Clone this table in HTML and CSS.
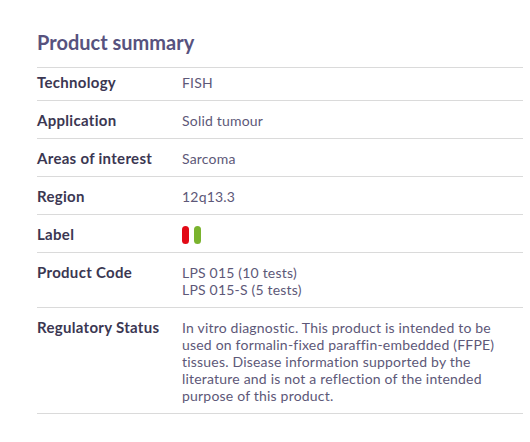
FILE: index.html
```html
<!DOCTYPE html>
<html>
<head>
<meta charset="utf-8">
<link rel="stylesheet" href="styles.css">
</head>
<body>
<section class="summary">
  <h2 class="title">Product summary</h2>
  <div class="table">
    <div class="row first"><div class="key">Technology</div><div class="val">FISH</div></div>
    <div class="row"><div class="key">Application</div><div class="val">Solid tumour</div></div>
    <div class="row"><div class="key">Areas of interest</div><div class="val">Sarcoma</div></div>
    <div class="row"><div class="key">Region</div><div class="val">12q13.3</div></div>
    <div class="row"><div class="key">Label</div><div class="val pills"><span class="pill red"></span><span class="pill green"></span></div></div>
    <div class="row"><div class="key">Product Code</div><div class="val">LPS 015 (10 tests)<br>LPS 015-S (5 tests)</div></div>
    <div class="row"><div class="key">Regulatory Status</div><div class="val">In vitro diagnostic. This product is intended to be used on formalin-fixed paraffin-embedded (FFPE) tissues. Disease information supported by the literature and is not a reflection of the intended purpose of this product.</div></div>
  </div>
</section>
</body>
</html>
```
FILE: styles.css
```css
html, body { margin: 0; padding: 0; background: #fff; }
body { font-family: "Lato", "Liberation Sans", sans-serif; }
.summary { padding: 29px 7px 0 37px; width: 486px; }
.title {
  margin: 0 0 12px 0;
  font-size: 20px;
  font-weight: 700;
  line-height: 26px;
  color: #57527e;
}
.table { border-top: 1px solid #dadada; }
.row {
  display: flex;
  border-bottom: 1px solid #dadada;
  padding: 11px 0 9px 0;
  font-size: 14px;
  line-height: 17px;
}
.row.first { padding-top: 6px; }
.key {
  width: 145px;
  flex: none;
  font-size: 15px;
  line-height: 17px;
  font-weight: 700;
  letter-spacing: 0.3px;
  color: #3b3752;
}
.val {
  flex: 1;
  color: #5d5878;
  font-weight: 400;
  line-height: 17px;
  letter-spacing: 0.2px;
}
.pills { display: flex; gap: 5px; align-items: center; height: 17px; }
.pill { width: 7px; height: 18px; border-radius: 4px; display: block; }
.red { background: #e20a16; }
.green { background: #7ab32e; }
```
